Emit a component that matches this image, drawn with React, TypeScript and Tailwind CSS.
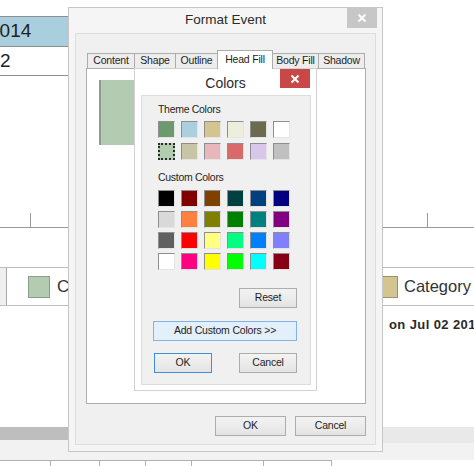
import clsx from "clsx";
import type { ReactNode } from "react";

const themeColors = [
  ["#6b9a6e", "#a9cfe0", "#d4c590", "#eeeedc", "#6b6a4e", "#ffffff"],
  ["#b3cbb0", "#c8c4a6", "#e8b7bb", "#d96a6a", "#d9c6ec", "#c0c0c0"],
];

const customColors = [
  ["#000000", "#800000", "#804000", "#004040", "#004080", "#000080"],
  ["#d9d9d9", "#ff8040", "#808000", "#008000", "#008080", "#800080"],
  ["#606060", "#ff0000", "#ffff80", "#00ff80", "#0080ff", "#8080ff"],
  ["#ffffff", "#ff0080", "#ffff00", "#00ff00", "#00ffff", "#880015"],
];

const tabs = [
  { label: "Content", w: "w-[48px]" },
  { label: "Shape", w: "w-[42px]" },
  { label: "Outline", w: "w-[43px]" },
  { label: "Head Fill", w: "w-[56px]", active: true },
  { label: "Body Fill", w: "w-[47px]" },
  { label: "Shadow", w: "w-[47px]" },
];

function CloseX() {
  return (
    <svg width="10" height="10" viewBox="0 0 10 10">
      <path d="M1.5 1.5L8.5 8.5M8.5 1.5L1.5 8.5" stroke="white" strokeWidth="2" />
    </svg>
  );
}

function Swatch({ color, selected }: { color: string; selected?: boolean }) {
  return (
    <div
      className={clsx(
        "h-[17px] w-[17px]",
        selected
          ? "border-2 border-dotted border-[#2a2a2a]"
          : "border border-t-[#8e8e8e] border-r-[#e4e4e4] border-b-[#e4e4e4] border-l-[#8e8e8e]"
      )}
      style={{ backgroundColor: color }}
    />
  );
}

function WinButton({
  children,
  className,
}: {
  children: ReactNode;
  className?: string;
}) {
  return (
    <div
      className={clsx(
        "flex h-[20px] items-center justify-center border text-[10.5px] tracking-[-0.2px] text-[#1e1e1e]",
        className ?? "border-[#adadad] bg-gradient-to-b from-[#f3f3f3] to-[#e4e4e4]"
      )}
    >
      {children}
    </div>
  );
}

function ColorsDialog() {
  return (
    <div className="absolute top-[68px] left-[134px] h-[323px] w-[183px] border border-[#d2d2d2] bg-white">
      <div className="relative flex h-[26px] items-center justify-center pt-[2px] text-[14px] text-[#2b2b2b]">
        Colors
        <div className="absolute top-0 right-[6px] flex h-[19px] w-[30px] items-center justify-center bg-[#c94747]">
          <CloseX />
        </div>
      </div>
      <div className="mx-[6px] flex h-[290px] w-[170px] flex-col border border-[#dcdcdc] bg-[#f0f0f0] pt-[7px]">
        <p className="pl-[16px] text-[10.5px] leading-[13px] tracking-[-0.3px] text-[#1e1e1e]">
          Theme Colors
        </p>
        <div className="mt-[5px] flex flex-col gap-[5px] pl-[16px]">
          {themeColors.map((row, r) => (
            <div key={r} className="flex gap-[6px]">
              {row.map((c, i) => (
                <Swatch key={i} color={c} selected={r === 1 && i === 0} />
              ))}
            </div>
          ))}
        </div>
        <p className="mt-[11px] pl-[16px] text-[10.5px] leading-[13px] tracking-[-0.3px] text-[#1e1e1e]">
          Custom Colors
        </p>
        <div className="mt-[6px] flex flex-col gap-[4px] pl-[16px]">
          {customColors.map((row, r) => (
            <div key={r} className="flex gap-[6px]">
              {row.map((c, i) => (
                <Swatch key={i} color={c} />
              ))}
            </div>
          ))}
        </div>
        <div className="mt-[18px] flex justify-end pr-[13px]">
          <WinButton className="w-[58px] border-[#adadad] bg-gradient-to-b from-[#f3f3f3] to-[#e4e4e4]">
            Reset
          </WinButton>
        </div>
        <div className="mt-[13px] pr-[13px] pl-[11px]">
          <WinButton className="w-full border-[#7eb4ea] bg-[#e3effb]">
            Add Custom Colors &gt;&gt;
          </WinButton>
        </div>
        <div className="mt-[12px] flex justify-between pr-[13px] pl-[12px]">
          <WinButton className="w-[58px] border-[#3c8fd8] bg-gradient-to-b from-[#f3f3f3] to-[#e4e4e4]">
            OK
          </WinButton>
          <WinButton className="w-[58px] border-[#adadad] bg-gradient-to-b from-[#f3f3f3] to-[#e4e4e4]">
            Cancel
          </WinButton>
        </div>
      </div>
    </div>
  );
}

function FormatEventDialog() {
  return (
    <div className="absolute top-[7px] left-[68px] h-[445px] w-[315px] border border-[#c6c6c6] bg-[#f5f5f5]">
      <div className="relative flex h-[25px] items-center justify-center text-[13.5px] text-[#2b2b2b]">
        Format Event
        <div className="absolute top-[-1px] right-[5px] flex h-[21px] w-[30px] items-center justify-center bg-[#c7c7c7]">
          <CloseX />
        </div>
      </div>
      <div className="mx-[6px] h-[412px] border border-[#dddddd] bg-[#f0f0f0] pt-[16px]">
        <div className="ml-[10px] w-[280px]">
          <div className="flex h-[18px] items-end pl-[1px]">
            {tabs.map((t, i) => (
              <div
                key={t.label}
                className={clsx(
                  "flex items-center justify-center border border-b-0 border-[#acacac] text-[10.5px] tracking-[-0.2px] text-[#1e1e1e]",
                  t.w,
                  i > 0 && "-ml-px",
                  t.active
                    ? "relative z-10 -mb-px h-[19px] bg-white"
                    : "h-[15px] bg-[#ededed]"
                )}
              >
                {t.label}
              </div>
            ))}
          </div>
          <div className="h-[336px] border border-[#acacac] bg-white pt-[11px] pl-[12px]">
            <div className="h-[65px] w-[42px] border-l-2 border-[#8d9c8b] bg-[#b3cbb0]" />
          </div>
          <div className="mt-[12px] flex justify-end gap-[9px]">
            <WinButton className="w-[71px] border-[#adadad] bg-gradient-to-b from-[#f3f3f3] to-[#e4e4e4]">
              OK
            </WinButton>
            <WinButton className="w-[71px] border-[#adadad] bg-gradient-to-b from-[#f3f3f3] to-[#e4e4e4]">
              Cancel
            </WinButton>
          </div>
        </div>
      </div>
    </div>
  );
}

export default function App() {
  return (
    <div className="relative h-[466px] w-[474px] overflow-hidden bg-white font-['Liberation_Sans',Arial,sans-serif] text-[#222]">
      {/* timeline behind the dialogs */}
      <div className="h-[16px]" />
      <div className="w-[240px]">
        <div className="flex h-[31px] items-center border-y border-[#8f8f8f] bg-[#a9cfdf] text-[19px]">
          <span className="ml-[-11px]">2014</span>
        </div>
        <div className="flex h-[29px] items-center border-b border-[#8f8f8f] text-[19px]">
          <span>2</span>
        </div>
      </div>
      <div className="h-[137px]" />
      <div className="flex h-[15px] justify-between border-b border-[#9a9a9a] pr-[46px] pl-[30px]">
        <div className="w-px bg-[#9a9a9a]" />
        <div className="w-px bg-[#9a9a9a]" />
      </div>
      <div className="h-[39px]" />
      <div className="flex h-[39px] items-center border-y border-[#bdbdbd]">
        <div className="flex w-[376px] items-center overflow-hidden">
          <div className="h-[37px] w-[7px] shrink-0 border-r border-[#a9a9a9] bg-[#efefef]" />
          <div className="ml-[21px] h-[22px] w-[22px] shrink-0 border border-[#8d9b8b] bg-[#b3cbb0]" />
          <span className="ml-[7px] text-[17px] whitespace-nowrap text-[#333]">Category</span>
        </div>
        <div className="h-[22px] w-[22px] shrink-0 border border-[#9c916c] bg-[#d4c590]" />
        <span className="ml-[6px] text-[16.5px] whitespace-nowrap text-[#333]">Category</span>
      </div>
      <div className="flex h-[37px] items-center pl-[389px]">
        <span className="text-[13px] font-bold tracking-[0.4px] whitespace-nowrap text-[#2a2a2a]">
          on Jul 02 2014
        </span>
      </div>
      <div className="h-[84px]" />
      <div className="flex h-[33px] items-start bg-[#f2f2f2]">
        <div className="h-[13px] w-[120px] bg-[#bebebe]" />
        <div className="ml-auto h-[16px] w-[91px] bg-[#e9e9e9]" />
      </div>
      <div className="flex h-[6px]">
        <div className="w-[51px] border-t border-r border-[#b0b0b0]" />
        <div className="w-[49px] border-t border-r border-[#b0b0b0]" />
        <div className="w-[46px] border-t border-r border-[#b0b0b0]" />
        <div className="w-[46px] border-t border-r border-[#b0b0b0]" />
        <div className="w-[72px] border-t border-r border-[#b0b0b0]" />
        <div className="w-[68px] border-t border-r border-[#b0b0b0]" />
      </div>

      <FormatEventDialog />
      <ColorsDialog />
    </div>
  );
}
